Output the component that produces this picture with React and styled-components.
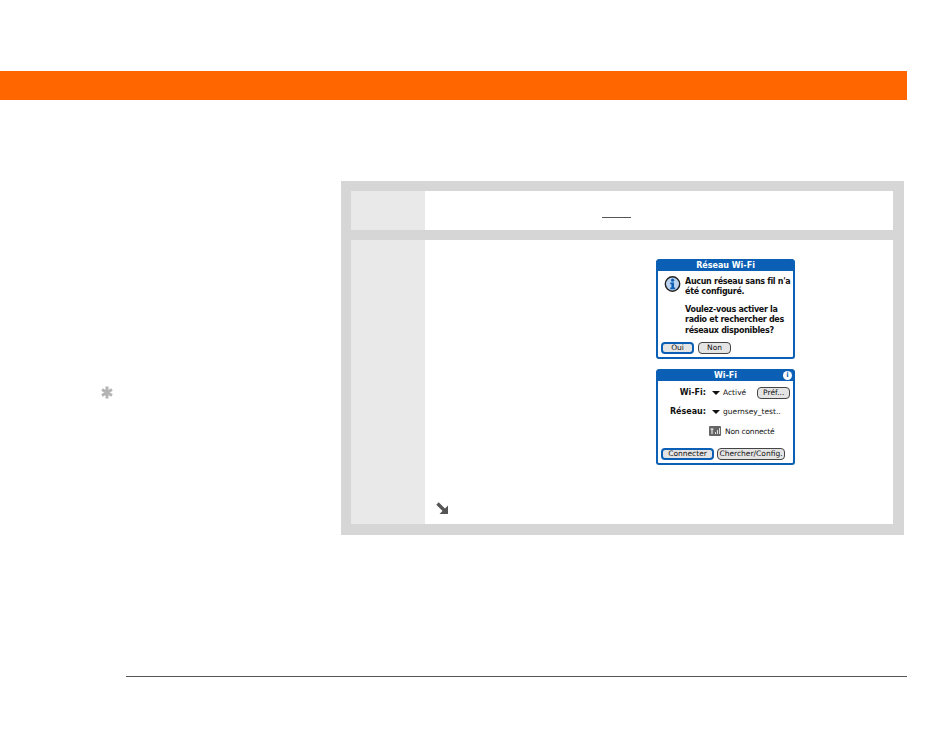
import styled, { createGlobalStyle } from 'styled-components';

const palmBlue = '#0b5fb4';
const band = '#d6d6d6';

const GlobalStyle = createGlobalStyle`
  html, body {
    margin: 0;
    background: #fff;
    font-family: "DejaVu Sans", sans-serif;
  }
`;

const Page = styled.div`
  width: 950px;
  height: 734px;
  padding-top: 71px;
  box-sizing: border-box;
  overflow: hidden;
`;
const HeaderBar = styled.div`
  width: 907px;
  height: 29px;
  background-color: #ff6600;
`;
const Content = styled.div`
  display: flex;
  margin-top: 81px;
`;
const Sidebar = styled.aside`
  width: 341px;
  padding: 205px 0 0 101px;
  box-sizing: border-box;
`;
const TipIcon = styled.svg`
  display: block;
`;
const Steps = styled.div`
  width: 563px;
  background-color: ${band};
  padding: 10px 11px 11px 10px;
  box-sizing: border-box;
  display: flex;
  flex-direction: column;
  gap: 10px;
`;
const Step = styled.div`
  display: flex;
  height: ${(p) => p.$height}px;
`;
const StepNumber = styled.div`
  width: 74px;
  background-color: #e9e9e9;
`;
const StepBody = styled.div`
  flex: 1;
  background-color: #fff;
  box-sizing: border-box;
  display: flex;
  flex-direction: column;
`;
const LinkBody = styled(StepBody)`
  padding: 26px 0 0 177px;
`;
const Link = styled.div`
  width: 29px;
  height: 1px;
  background-color: #555;
`;
const ScreensBody = styled(StepBody)`
  padding: 19px 0 0 11px;
`;
const Screens = styled.div`
  margin-left: 220px;
  display: flex;
  flex-direction: column;
  gap: 10px;
  height: 225px;
`;
const Dialog = styled.div`
  width: 139px;
  height: ${(p) => p.$height}px;
  box-sizing: border-box;
  border: 2px solid ${palmBlue};
  border-top: 0;
  border-radius: 4px 4px 3px 3px;
  background: #fff;
  display: flex;
  flex-direction: column;
  color: #111;
`;
const DialogTitle = styled.div`
  position: relative;
  height: 12px;
  margin: 0 -2px;
  border-radius: 4px 4px 0 0;
  background-color: ${palmBlue};
  color: #fff;
  font-size: 8px;
  font-weight: 700;
  line-height: 13px;
  text-align: center;
`;
const InfoBadge = styled.span`
  position: absolute;
  right: 3px;
  top: 2px;
  width: 9px;
  height: 9px;
  border-radius: 50%;
  background: #fff;
  color: ${palmBlue};
  font-size: 7px;
  font-weight: 700;
  line-height: 9px;
`;
const AlertRow = styled.div`
  display: flex;
  flex: 1;
  padding: 5px 0 0 6px;
  gap: 4px;
`;
const AlertText = styled.p`
  margin: 1px 0 0;
  font-size: 8px;
  font-weight: 700;
  line-height: 10.4px;
  white-space: nowrap;
  letter-spacing: -0.3px;
`;
const Spacer = styled.span`
  display: block;
  height: 7px;
`;
const ButtonRow = styled.div`
  display: flex;
  gap: ${(p) => p.$gap}px;
  padding: 0 0 3px 3px;
`;
const PalmButton = styled.div`
  width: ${(p) => p.$width}px;
  height: 12px;
  box-sizing: border-box;
  border: ${(p) => (p.$focus ? `2px solid ${palmBlue}` : '1px solid #444')};
  border-radius: 4px;
  background: #e4e4e4;
  font-size: 7.5px;
  line-height: ${(p) => (p.$focus ? 8 : 10)}px;
  text-align: center;
  white-space: nowrap;
`;
const Fields = styled.div`
  flex: 1;
  display: flex;
  flex-direction: column;
  padding-top: 2px;
`;
const FieldRow = styled.div`
  display: flex;
  align-items: center;
  height: ${(p) => p.$height}px;
`;
const FieldLabel = styled.span`
  width: 48px;
  text-align: right;
  font-size: 8px;
  font-weight: 700;
  margin-right: 6px;
`;
const Triangle = styled.span`
  width: 0;
  height: 0;
  border-left: 4px solid transparent;
  border-right: 4px solid transparent;
  border-top: 4px solid #111;
  margin-right: 3px;
`;
const FieldValue = styled.span`
  font-size: 7.5px;
  white-space: nowrap;
`;
const PrefButton = styled(PalmButton)`
  margin-left: 11px;
`;
const Status = styled.div`
  display: flex;
  align-items: center;
  gap: 4px;
  padding: 5px 0 0 51px;
  font-size: 7.5px;
  letter-spacing: -0.2px;
`;
const Continue = styled.div`
  margin-top: 15px;
`;
const Rule = styled.div`
  width: 781px;
  height: 1px;
  margin: 141px 0 0 126px;
  background-color: #555;
`;

function AlertIcon() {
  return (
    <svg width="17" height="16" viewBox="0 0 17 16">
      <circle cx="8.5" cy="8" r="7.2" fill="#bcd3f0" stroke="#222" strokeWidth="1.4" />
      <circle cx="8.6" cy="4.2" r="1.6" fill={palmBlue} />
      <path d="M6.2 6.6h3.8v5h1.2v1.6H6.2v-1.6h1.2v-3.4H6.2z" fill={palmBlue} />
    </svg>
  );
}

function SignalIcon() {
  return (
    <svg width="12" height="10" viewBox="0 0 12 10">
      <rect width="12" height="10" rx="1" fill="#666" />
      <path d="M1.5 3h3M3 3v5" stroke="#fff" strokeWidth="1" />
      <path d="M6 8V6h1v2zM8 8V4h1v4zM10 8V2h1v6z" fill="#ddd" />
    </svg>
  );
}

export default function App() {
  return (
    <Page>
      <GlobalStyle />
      <HeaderBar />
      <Content>
        <Sidebar>
          <TipIcon width="12" height="13" viewBox="0 0 12 13">
            <path d="M6 0.5v12M1 3.5l10 6M11 3.5l-10 6" stroke="#b4b4b4" strokeWidth="3" />
          </TipIcon>
        </Sidebar>
        <Steps>
          <Step $height={39}>
            <StepNumber />
            <LinkBody>
              <Link />
            </LinkBody>
          </Step>
          <Step $height={284}>
            <StepNumber />
            <ScreensBody>
              <Screens>
                <Dialog $height={100}>
                  <DialogTitle>Réseau Wi-Fi</DialogTitle>
                  <AlertRow>
                    <AlertIcon />
                    <AlertText>
                      Aucun réseau sans fil n'a
                      <br />
                      été configuré.
                      <Spacer />
                      Voulez-vous activer la
                      <br />
                      radio et rechercher des
                      <br />
                      réseaux disponibles?
                    </AlertText>
                  </AlertRow>
                  <ButtonRow $gap={4}>
                    <PalmButton $width={33} $focus>Oui</PalmButton>
                    <PalmButton $width={33}>Non</PalmButton>
                  </ButtonRow>
                </Dialog>
                <Dialog $height={96}>
                  <DialogTitle>
                    Wi-Fi
                    <InfoBadge>i</InfoBadge>
                  </DialogTitle>
                  <Fields>
                    <FieldRow $height={19}>
                      <FieldLabel>Wi-Fi:</FieldLabel>
                      <Triangle />
                      <FieldValue>Activé</FieldValue>
                      <PrefButton $width={33}>Préf...</PrefButton>
                    </FieldRow>
                    <FieldRow $height={19}>
                      <FieldLabel>Réseau:</FieldLabel>
                      <Triangle />
                      <FieldValue>guernsey_test..</FieldValue>
                    </FieldRow>
                    <Status>
                      <SignalIcon />
                      Non connecté
                    </Status>
                  </Fields>
                  <ButtonRow $gap={3}>
                    <PalmButton $width={53} $focus>Connecter</PalmButton>
                    <PalmButton $width={68}>Chercher/Config.</PalmButton>
                  </ButtonRow>
                </Dialog>
              </Screens>
              <Continue>
                <svg width="12" height="12" viewBox="0 0 12 12">
                  <path d="M1.5 1.5l7 7" stroke="#555" strokeWidth="3.4" />
                  <path d="M12 3.5v8.5h-8.5z" fill="#555" />
                </svg>
              </Continue>
            </ScreensBody>
          </Step>
        </Steps>
      </Content>
      <Rule />
    </Page>
  );
}
